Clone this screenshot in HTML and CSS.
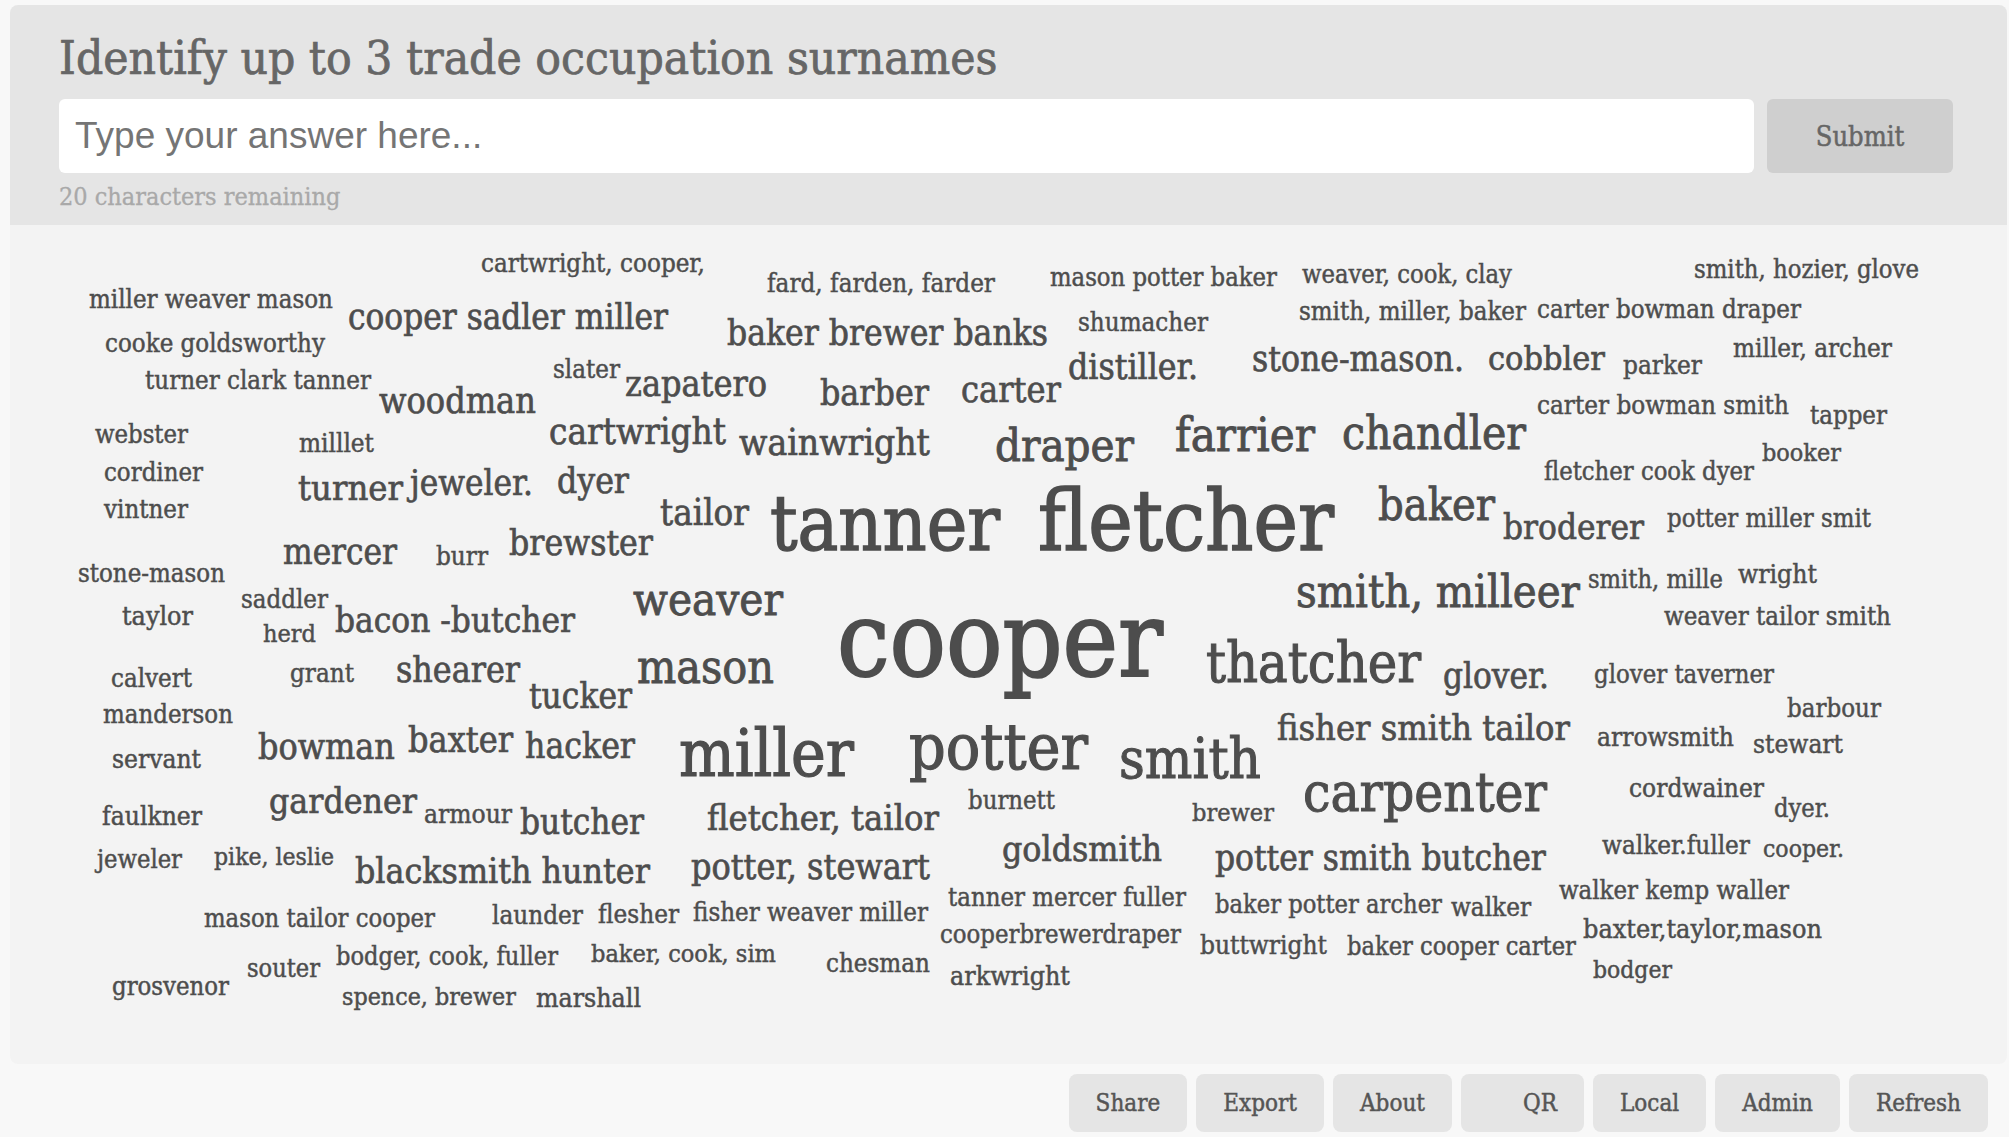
FILE: index.html
```html
<!DOCTYPE html>
<html lang="en">
<head>
<meta charset="utf-8">
<title>Identify up to 3 trade occupation surnames</title>
<link rel="stylesheet" href="styles.css">
</head>
<body>
<div class="card">
  <div class="head">
    <h1 class="title">Identify up to 3 trade occupation surnames</h1>
    <div class="row">
      <input class="answer" type="text" placeholder="Type your answer here...">
      <button class="submit" type="button">Submit</button>
    </div>
    <div class="count">20 characters remaining</div>
  </div>
  <div class="cloud">
    <span class="w" data-x="481" data-r="705" data-b="273">cartwright, cooper,</span>
    <span class="w" data-x="767" data-r="995" data-b="293">fard, farden, farder</span>
    <span class="w" data-x="1050" data-r="1277" data-b="286">mason potter baker</span>
    <span class="w" data-x="1302" data-r="1512" data-b="283">weaver, cook, clay</span>
    <span class="w" data-x="1694" data-r="1919" data-b="278">smith, hozier, glove</span>
    <span class="w" data-x="89" data-r="333" data-b="308">miller weaver mason</span>
    <span class="w" data-x="348" data-r="668" data-b="329">cooper sadler miller</span>
    <span class="w" data-x="1299" data-r="1526" data-b="320">smith, miller, baker</span>
    <span class="w" data-x="1537" data-r="1801" data-b="318">carter bowman draper</span>
    <span class="w" data-x="1078" data-r="1208" data-b="332">shumacher</span>
    <span class="w" data-x="727" data-r="1048" data-b="344">baker brewer banks</span>
    <span class="w" data-x="105" data-r="325" data-b="352">cooke goldsworthy</span>
    <span class="w" data-x="1252" data-r="1464" data-b="370">stone-mason.</span>
    <span class="w" data-x="1488" data-r="1605" data-b="370">cobbler</span>
    <span class="w" data-x="1623" data-r="1702" data-b="375">parker</span>
    <span class="w" data-x="1733" data-r="1892" data-b="358">miller, archer</span>
    <span class="w" data-x="1068" data-r="1198" data-b="379">distiller.</span>
    <span class="w" data-x="145" data-r="371" data-b="390">turner clark tanner</span>
    <span class="w" data-x="553" data-r="620" data-b="379">slater</span>
    <span class="w" data-x="625" data-r="767" data-b="396">zapatero</span>
    <span class="w" data-x="820" data-r="929" data-b="405">barber</span>
    <span class="w" data-x="961" data-r="1061" data-b="402">carter</span>
    <span class="w" data-x="379" data-r="536" data-b="413">woodman</span>
    <span class="w" data-x="1537" data-r="1789" data-b="415">carter bowman smith</span>
    <span class="w" data-x="1810" data-r="1887" data-b="424">tapper</span>
    <span class="w" data-x="95" data-r="188" data-b="443">webster</span>
    <span class="w" data-x="549" data-r="726" data-b="445">cartwright</span>
    <span class="w" data-x="739" data-r="930" data-b="456">wainwright</span>
    <span class="w" data-x="995" data-r="1134" data-b="461">draper</span>
    <span class="w" data-x="1175" data-r="1315" data-b="450">farrier</span>
    <span class="w" data-x="1342" data-r="1526" data-b="449">chandler</span>
    <span class="w" data-x="299" data-r="374" data-b="453">milllet</span>
    <span class="w" data-x="1762" data-r="1841" data-b="462">booker</span>
    <span class="w" data-x="104" data-r="203" data-b="481">cordiner</span>
    <span class="w" data-x="1544" data-r="1754" data-b="480">fletcher cook dyer</span>
    <span class="w" data-x="298" data-r="403" data-b="500">turner</span>
    <span class="w" data-x="410" data-r="533" data-b="495">jeweler.</span>
    <span class="w" data-x="557" data-r="629" data-b="493">dyer</span>
    <span class="w" data-x="104" data-r="188" data-b="518">vintner</span>
    <span class="w" data-x="1378" data-r="1495" data-b="520">baker</span>
    <span class="w" data-x="660" data-r="749" data-b="526">tailor</span>
    <span class="w" data-x="770" data-r="1000" data-b="550">tanner</span>
    <span class="w" data-x="1038" data-r="1334" data-b="550">fletcher</span>
    <span class="w" data-x="1503" data-r="1644" data-b="539">broderer</span>
    <span class="w" data-x="1667" data-r="1871" data-b="527">potter miller smit</span>
    <span class="w" data-x="283" data-r="397" data-b="564">mercer</span>
    <span class="w" data-x="436" data-r="488" data-b="566">burr</span>
    <span class="w" data-x="509" data-r="653" data-b="555">brewster</span>
    <span class="w" data-x="78" data-r="225" data-b="582">stone-mason</span>
    <span class="w" data-x="1296" data-r="1580" data-b="608">smith, milleer</span>
    <span class="w" data-x="1588" data-r="1723" data-b="588">smith, mille</span>
    <span class="w" data-x="1738" data-r="1817" data-b="583">wright</span>
    <span class="w" data-x="633" data-r="783" data-b="615">weaver</span>
    <span class="w" data-x="241" data-r="328" data-b="608">saddler</span>
    <span class="w" data-x="122" data-r="193" data-b="625">taylor</span>
    <span class="w" data-x="335" data-r="575" data-b="632">bacon -butcher</span>
    <span class="w" data-x="1664" data-r="1891" data-b="625">weaver tailor smith</span>
    <span class="w" data-x="263" data-r="316" data-b="642">herd</span>
    <span class="w" data-x="837" data-r="1163" data-b="676">cooper</span>
    <span class="w" data-x="1206" data-r="1421" data-b="682">thatcher</span>
    <span class="w" data-x="1443" data-r="1549" data-b="688">glover.</span>
    <span class="w" data-x="1594" data-r="1774" data-b="683">glover taverner</span>
    <span class="w" data-x="111" data-r="192" data-b="687">calvert</span>
    <span class="w" data-x="290" data-r="354" data-b="683">grant</span>
    <span class="w" data-x="396" data-r="520" data-b="682">shearer</span>
    <span class="w" data-x="529" data-r="632" data-b="708">tucker</span>
    <span class="w" data-x="637" data-r="774" data-b="683">mason</span>
    <span class="w" data-x="103" data-r="233" data-b="723">manderson</span>
    <span class="w" data-x="1787" data-r="1881" data-b="717">barbour</span>
    <span class="w" data-x="1277" data-r="1570" data-b="740">fisher smith tailor</span>
    <span class="w" data-x="1597" data-r="1734" data-b="746">arrowsmith</span>
    <span class="w" data-x="1753" data-r="1843" data-b="753">stewart</span>
    <span class="w" data-x="258" data-r="395" data-b="759">bowman</span>
    <span class="w" data-x="408" data-r="513" data-b="752">baxter</span>
    <span class="w" data-x="525" data-r="635" data-b="757">hacker</span>
    <span class="w" data-x="679" data-r="854" data-b="776">miller</span>
    <span class="w" data-x="909" data-r="1088" data-b="770">potter</span>
    <span class="w" data-x="1119" data-r="1261" data-b="778">smith</span>
    <span class="w" data-x="112" data-r="201" data-b="768">servant</span>
    <span class="w" data-x="1303" data-r="1547" data-b="811">carpenter</span>
    <span class="w" data-x="1629" data-r="1764" data-b="797">cordwainer</span>
    <span class="w" data-x="1774" data-r="1830" data-b="817">dyer.</span>
    <span class="w" data-x="102" data-r="202" data-b="825">faulkner</span>
    <span class="w" data-x="269" data-r="417" data-b="813">gardener</span>
    <span class="w" data-x="424" data-r="512" data-b="823">armour</span>
    <span class="w" data-x="520" data-r="644" data-b="834">butcher</span>
    <span class="w" data-x="707" data-r="939" data-b="830">fletcher, tailor</span>
    <span class="w" data-x="968" data-r="1055" data-b="809">burnett</span>
    <span class="w" data-x="1192" data-r="1274" data-b="821">brewer</span>
    <span class="w" data-x="1602" data-r="1750" data-b="855">walker.fuller</span>
    <span class="w" data-x="1763" data-r="1844" data-b="858">cooper.</span>
    <span class="w" data-x="97" data-r="182" data-b="868">jeweler</span>
    <span class="w" data-x="214" data-r="334" data-b="866">pike, leslie</span>
    <span class="w" data-x="355" data-r="650" data-b="883">blacksmith hunter</span>
    <span class="w" data-x="691" data-r="930" data-b="879">potter, stewart</span>
    <span class="w" data-x="1002" data-r="1162" data-b="861">goldsmith</span>
    <span class="w" data-x="1215" data-r="1546" data-b="870">potter smith butcher</span>
    <span class="w" data-x="1559" data-r="1789" data-b="899">walker kemp waller</span>
    <span class="w" data-x="948" data-r="1186" data-b="906">tanner mercer fuller</span>
    <span class="w" data-x="1215" data-r="1442" data-b="913">baker potter archer</span>
    <span class="w" data-x="1451" data-r="1531" data-b="917">walker</span>
    <span class="w" data-x="204" data-r="435" data-b="927">mason tailor cooper</span>
    <span class="w" data-x="492" data-r="583" data-b="925">launder</span>
    <span class="w" data-x="598" data-r="679" data-b="924">flesher</span>
    <span class="w" data-x="693" data-r="928" data-b="921">fisher weaver miller</span>
    <span class="w" data-x="940" data-r="1181" data-b="943">cooperbrewerdraper</span>
    <span class="w" data-x="1583" data-r="1822" data-b="938">baxter,taylor,mason</span>
    <span class="w" data-x="336" data-r="558" data-b="965">bodger, cook, fuller</span>
    <span class="w" data-x="591" data-r="776" data-b="962">baker, cook, sim</span>
    <span class="w" data-x="1200" data-r="1327" data-b="954">buttwright</span>
    <span class="w" data-x="1347" data-r="1576" data-b="955">baker cooper carter</span>
    <span class="w" data-x="826" data-r="930" data-b="973">chesman</span>
    <span class="w" data-x="247" data-r="320" data-b="977">souter</span>
    <span class="w" data-x="950" data-r="1070" data-b="985">arkwright</span>
    <span class="w" data-x="1593" data-r="1672" data-b="978">bodger</span>
    <span class="w" data-x="112" data-r="229" data-b="995">grosvenor</span>
    <span class="w" data-x="342" data-r="516" data-b="1006">spence, brewer</span>
    <span class="w" data-x="536" data-r="641" data-b="1007">marshall</span>
  </div>
</div>
<div class="actions">
  <button class="act" type="button">Share</button>
  <button class="act" type="button">Export</button>
  <button class="act" type="button">About</button>
  <button class="act" type="button"><span class="ico"></span>QR</button>
  <button class="act" type="button">Local</button>
  <button class="act" type="button">Admin</button>
  <button class="act" type="button">Refresh</button>
</div>
<script src="cloud.js"></script>
</body>
</html>
```

FILE: styles.css
```css
html, body {
  margin: 0;
  padding: 0;
  background: #f8f8f8;
}
body {
  font-family: "DejaVu Serif Condensed", "DejaVu Serif", serif;
  font-stretch: condensed;
  color: #4a4a4a;
  overflow: hidden;
}
.card {
  margin: 5px 2px 0 10px;
}
.head {
  background: #e5e5e5;
  border-radius: 8px 8px 0 0;
  padding: 25px 54px 13px 49px;
}
.title {
  margin: 0;
  font-size: 47.5px;
  line-height: 56px;
  font-weight: normal;
  color: #666666;
  white-space: nowrap;
  -webkit-text-stroke: 0.7px #666666;
}
.row {
  display: flex;
  gap: 13px;
  margin-top: 13px;
}
.answer {
  flex: 1;
  height: 74px;
  box-sizing: border-box;
  border: none;
  border-radius: 6px;
  background: #ffffff;
  padding: 0 16px;
  font-family: "Liberation Sans", Arial, sans-serif;
  font-size: 37px;
  color: #333;
  outline: none;
}
.answer::placeholder {
  color: #757575;
}
.submit {
  width: 186px;
  height: 74px;
  border: none;
  border-radius: 6px;
  background: #cfcfcf;
  color: #666666;
  font-family: inherit;
  font-stretch: condensed;
  font-size: 27px;
  padding: 0;
  -webkit-text-stroke: 0.5px #666666;
}
.count {
  margin-top: 9px;
  font-size: 25px;
  line-height: 30px;
  color: #a9a9a9;
  -webkit-text-stroke: 0.3px #a9a9a9;
}
.cloud {
  position: relative;
  height: 839px;
  background: #f3f3f3;
  border-radius: 0 0 8px 8px;
  overflow: hidden;
}
.w {
  position: absolute;
  left: 0;
  top: 0;
  white-space: nowrap;
  line-height: 1;
  font-size: 28px;
  color: #4d4d4d;
  -webkit-text-stroke: 0.018em #4d4d4d;
}
.mark {
  display: inline-block;
  width: 0;
  height: 0;
  vertical-align: baseline;
}
.actions {
  display: flex;
  justify-content: flex-end;
  gap: 9px;
  margin-top: 10px;
  padding-right: 21px;
}
.act {
  height: 58px;
  border: none;
  border-radius: 8px;
  background: #e5e5e5;
  color: #555555;
  font-family: inherit;
  font-stretch: condensed;
  font-size: 24px;
  padding: 0 27px;
  display: flex;
  align-items: center;
  -webkit-text-stroke: 0.45px #555555;
}
.ico {
  display: inline-block;
  width: 35px;
}
```

FILE: cloud.js
```javascript
(function () {
  var cloud = document.querySelector('.cloud');
  var cr = cloud.getBoundingClientRect();
  var probe = document.createElement('span');
  probe.className = 'w';
  probe.style.fontSize = '100px';
  probe.textContent = 'x';
  var mark = document.createElement('i');
  mark.className = 'mark';
  probe.appendChild(mark);
  cloud.appendChild(probe);
  var ratio = (mark.getBoundingClientRect().top - probe.getBoundingClientRect().top) / 100;
  cloud.removeChild(probe);
  var words = cloud.querySelectorAll('.w');
  Array.prototype.forEach.call(words, function (el) {
    var x = +el.dataset.x, r = +el.dataset.r, b = +el.dataset.b;
    el.style.fontSize = '100px';
    var w = el.getBoundingClientRect().width;
    var fs = 100 * (r - x) / w;
    el.style.fontSize = fs.toFixed(2) + 'px';
    el.style.left = (x - cr.left).toFixed(1) + 'px';
    el.style.top = (b - cr.top - ratio * fs).toFixed(1) + 'px';
  });
})();
```
